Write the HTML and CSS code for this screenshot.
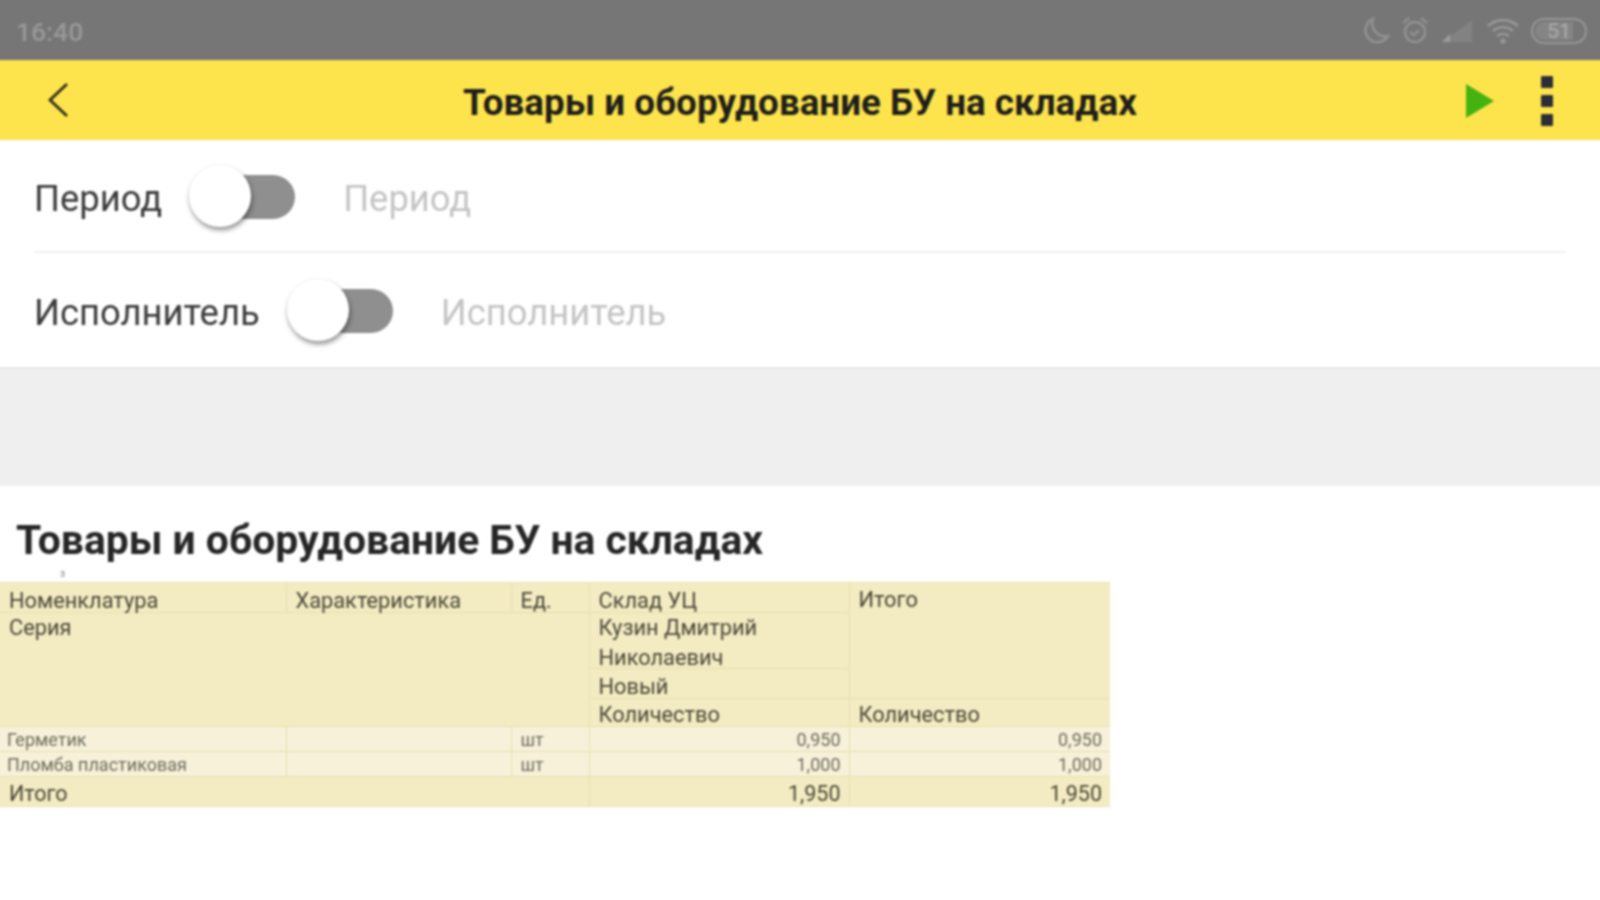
FILE: index.html
```html
<!DOCTYPE html>
<html lang="ru">
<head>
<meta charset="utf-8">
<title>Товары и оборудование БУ на складах</title>
<link rel="stylesheet" href="styles.css">
</head>
<body>
<div class="screen">
  <header class="status">
    <span class="time">16:40</span>
    <div class="status-icons">
      <svg class="ic-moon" width="28" height="30" viewBox="0 0 28 30"><path d="M11 3a12 12 0 1 0 15 17A13 13 0 0 1 11 3z" fill="none" stroke="#919191" stroke-width="2.6"/></svg>
      <svg class="ic-alarm" width="28" height="30" viewBox="0 0 28 30"><circle cx="14" cy="16" r="10" fill="none" stroke="#919191" stroke-width="2.6"/><path d="M2 7l6-5M26 7l-6-5M9 16l4 3 5-5" fill="none" stroke="#919191" stroke-width="2.4"/></svg>
      <svg class="ic-signal" width="32" height="24" viewBox="0 0 32 24"><path d="M31 1v22H1z" fill="#828282"/><path d="M1 23l8-8v8z" fill="#9c9c9c"/></svg>
      <svg class="ic-wifi" width="32" height="26" viewBox="0 0 32 26"><path d="M1 8a22 22 0 0 1 30 0M6 13a15 15 0 0 1 20 0M10 18a9 9 0 0 1 12 0" fill="none" stroke="#979797" stroke-width="2.6"/><circle cx="16" cy="23" r="2.6" fill="#979797"/></svg>
      <div class="battery"><span class="battery-fill">51</span></div>
    </div>
  </header>

  <nav class="toolbar">
    <svg class="back" width="24" height="36" viewBox="0 0 24 36"><path d="M21 2L4 18l17 16" fill="none" stroke="#2b2a20" stroke-width="2.8"/></svg>
    <h1 class="toolbar-title">Товары и оборудование БУ на складах</h1>
    <svg class="play" width="30" height="36" viewBox="0 0 30 36"><path d="M1 1l28 17L1 35z" fill="#44b20f"/></svg>
    <div class="menu"><i></i><i></i><i></i></div>
  </nav>

  <section class="form">
    <div class="field field-first">
      <span class="field-label">Период</span>
      <div class="toggle"><span class="knob"></span></div>
      <span class="field-hint">Период</span>
    </div>
    <div class="field">
      <span class="field-label">Исполнитель</span>
      <div class="toggle"><span class="knob"></span></div>
      <span class="field-hint">Исполнитель</span>
    </div>
  </section>

  <div class="band"></div>

  <main class="report">
    <h2 class="report-title">Товары и оборудование БУ на складах</h2>
    <div class="mark">з</div>
    <table class="grid">
      <colgroup>
        <col class="c1"><col class="c2"><col class="c3"><col class="c4"><col class="c5">
      </colgroup>
      <tr class="r-a">
        <td>Номенклатура</td><td>Характеристика</td><td>Ед.</td><td>Склад УЦ</td>
        <td rowspan="3" class="top">Итого</td>
      </tr>
      <tr class="r-name">
        <td colspan="3" rowspan="3" class="top">Серия</td>
        <td class="names"><div class="two-lines">Кузин Дмитрий Николаевич</div></td>
      </tr>
      <tr class="r-a"><td>Новый</td></tr>
      <tr class="r-b">
        <td>Количество</td><td>Количество</td>
      </tr>
      <tr class="r-data">
        <td>Герметик</td><td></td><td>шт</td><td class="num">0,950</td><td class="num">0,950</td>
      </tr>
      <tr class="r-data">
        <td>Пломба пластиковая</td><td></td><td>шт</td><td class="num">1,000</td><td class="num">1,000</td>
      </tr>
      <tr class="r-total">
        <td colspan="3">Итого</td><td class="num">1,950</td><td class="num">1,950</td>
      </tr>
    </table>
  </main>
</div>
</body>
</html>
```
FILE: styles.css
```css
* { box-sizing: border-box; }
html, body { margin: 0; padding: 0; background: #fff; overflow: hidden; height: 100%; }
/* the frame overshoots the window by 6px each side so the soft focus does not fade at the edges */
.screen {
  width: 1612px; height: 912px; margin: -6px;
  font-family: Roboto, "Liberation Sans", sans-serif;
  display: flex; flex-direction: column;
  filter: blur(0.8px);
}
.status {
  height: 66px; flex: none; background: #767676;
  border-bottom: 1px solid #6e6a78;
  display: flex; align-items: center; justify-content: space-between;
  padding: 8px 19px 0 22px;
}
.time { font-size: 26.5px; font-weight: 500; color: #989898; padding-top: 1px; }
.status-icons { display: flex; align-items: center; gap: 11px; }
.ic-signal { margin-right: 3px; }
.ic-alarm { margin-right: 1px; }
.battery {
  width: 56px; height: 26px; border: 2px solid #979797; border-radius: 13px;
  display: flex; overflow: hidden; padding: 2px; margin-left: 1px;
}
.battery-fill {
  width: 38px; background: #858585; border-radius: 10px 0 0 10px;
  color: #a6a6a6; font-size: 21px; font-weight: 500; line-height: 19px; text-align: right; padding-right: 2px;
}
.toolbar {
  height: 80px; flex: none; background: #fee44c;
  display: flex; align-items: center;
  padding: 0 53px 0 52px;
  border-bottom: 1px solid #f2dc6a;
}
.back { flex: none; margin-top: 1px; }
.toolbar-title {
  flex: 1; margin: 0; text-align: center;
  font-size: 36.8px; font-weight: 700; color: #1e1e1a;
  padding: 5px 0 0 65px;
}
.play { flex: none; margin: 2px 46px 0 0; }
.menu { flex: none; display: flex; flex-direction: column; gap: 7px; margin-top: 2px; }
.menu i { display: block; width: 12px; height: 12px; background: #2d2d38; border-radius: 1px; }
.form { flex: none; height: 229px; padding: 0 40px; border-bottom: 2px solid #e6e6e6; }
.field { height: 113px; display: flex; align-items: center; padding-top: 6px; }
.field-first { border-bottom: 2px solid #f0f0f0; }
.field-label { font-size: 36.4px; color: #3a3a3a; }
.field-hint { font-size: 36.4px; color: #c4c4c4; margin-left: 48px; }
.toggle {
  position: relative; width: 105px; height: 44px; margin-left: 28px;
  background: #8f8f8f; border-radius: 22px;
  margin-top: -4px;
}
.knob {
  position: absolute; left: -1px; top: -10px; width: 62px; height: 62px;
  background: #fff; border-radius: 50%;
  box-shadow: 1px 3px 5px rgba(0,0,0,.45);
}
.band { flex: none; height: 117px; background: #efefef; }
.report { flex: 1; display: flex; flex-direction: column; }
.report-title {
  margin: 29px 0 0 22px; font-size: 40.8px; font-weight: 700; color: #262626;
  line-height: 50px; height: 50px; white-space: nowrap;
}
.mark { height: 17px; margin-left: 66px; font-size: 10px; line-height: 17px; color: #8a8a8a; }
.grid {
  width: 1116px; table-layout: fixed; border-collapse: collapse;
  background: #f3ebc2; color: #4a4838;
  font-size: 21.8px;
}
.c1 { width: 292px; } .c2 { width: 225px; } .c3 { width: 78px; } .c4 { width: 260px; } .c5 { width: 261px; }
.grid td {
  border: 1.5px solid #e9e0ae; padding: 3px 8px 0 9px; line-height: 23px;
}
.grid tr > td:first-child { border-left: 0; }
.grid tr > td:last-child { border-right: 0; }
.grid .top { vertical-align: top; padding-top: 5px; }
.grid .r-name .top { padding-top: 3px; }
.grid .r-a td:first-child, .grid .r-name td:first-child, .grid .r-total td:first-child { padding-left: 15px; }
.grid .names { vertical-align: top; padding-top: 0; }
.two-lines { height: 50px; line-height: 30px; }
.grid .r-a td { height: 30px; padding-top: 5px; }
.grid .r-a td:only-child { padding-left: 9px; }
.r-b td { height: 28px; }
.r-name td { height: 56px; }
.grid .r-data td {
  height: 25px; background: #f7f1da; font-size: 18px; line-height: 20px; color: #6b6a5c; padding: 1px 8px 0 7px;
}
.grid .r-data td:first-child { padding-left: 13px; }
.grid .r-data td:nth-child(3) { padding-left: 9px; }
.r-total td { height: 30px; font-size: 21.5px; }
.num { text-align: right; }
```
